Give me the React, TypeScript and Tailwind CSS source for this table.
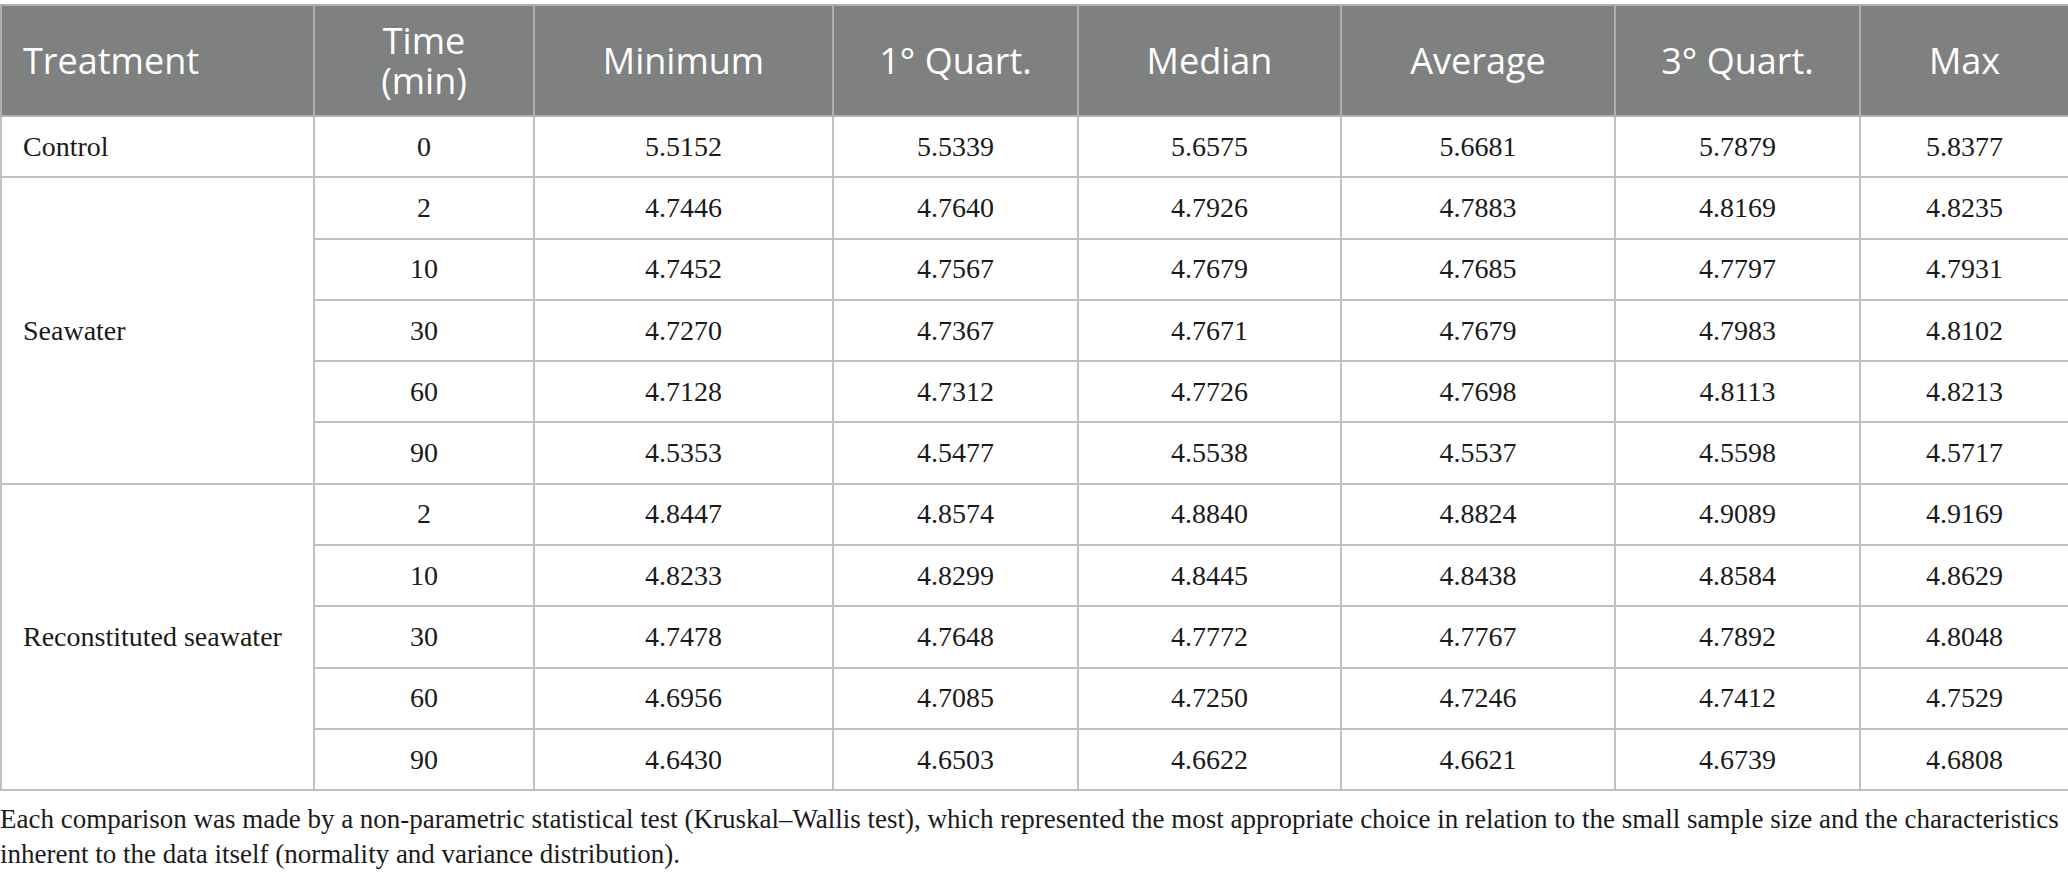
const headers = ["Treatment", "Time\n(min)", "Minimum", "1° Quart.", "Median", "Average", "3° Quart.", "Max"];

const colWidths = ["w-[313px]", "w-[220px]", "w-[299px]", "w-[245px]", "w-[263px]", "w-[274px]", "w-[245px]", "w-[209px]"];

type Group = { name: string; rows: string[][] };

const groups: Group[] = [
  { name: "Control", rows: [["0", "5.5152", "5.5339", "5.6575", "5.6681", "5.7879", "5.8377"]] },
  {
    name: "Seawater",
    rows: [
      ["2", "4.7446", "4.7640", "4.7926", "4.7883", "4.8169", "4.8235"],
      ["10", "4.7452", "4.7567", "4.7679", "4.7685", "4.7797", "4.7931"],
      ["30", "4.7270", "4.7367", "4.7671", "4.7679", "4.7983", "4.8102"],
      ["60", "4.7128", "4.7312", "4.7726", "4.7698", "4.8113", "4.8213"],
      ["90", "4.5353", "4.5477", "4.5538", "4.5537", "4.5598", "4.5717"],
    ],
  },
  {
    name: "Reconstituted seawater",
    rows: [
      ["2", "4.8447", "4.8574", "4.8840", "4.8824", "4.9089", "4.9169"],
      ["10", "4.8233", "4.8299", "4.8445", "4.8438", "4.8584", "4.8629"],
      ["30", "4.7478", "4.7648", "4.7772", "4.7767", "4.7892", "4.8048"],
      ["60", "4.6956", "4.7085", "4.7250", "4.7246", "4.7412", "4.7529"],
      ["90", "4.6430", "4.6503", "4.6622", "4.6621", "4.6739", "4.6808"],
    ],
  },
];

export default function App() {
  return (
    <div className="w-[2068px] bg-white pt-[4px]">
      <table className="w-full table-fixed border-collapse">
        <colgroup>
          {colWidths.map((w, i) => (
            <col key={i} className={w} />
          ))}
        </colgroup>
        <thead>
          <tr className="h-[111px] bg-[#7f8080]">
            {headers.map((h, i) => (
              <th
                key={i}
                className={
                  "border-2 border-[#b0b0b0] font-['Open_Sans',sans-serif] text-[36px] font-normal leading-[40px] text-white whitespace-pre-line " +
                  (i === 0 ? "pl-[21px] text-left" : "text-center")
                }
              >
                {h}
              </th>
            ))}
          </tr>
        </thead>
        <tbody className="font-['Liberation_Serif',serif] text-[28px] text-[#1a1a1a]">
          {groups.map((g) =>
            g.rows.map((r, ri) => (
              <tr key={g.name + ri} className="h-[61.3px]">
                {ri === 0 && (
                  <td rowSpan={g.rows.length} className="border-2 border-[#c0c0c0] pl-[21px] text-left">
                    {g.name}
                  </td>
                )}
                {r.map((v, ci) => (
                  <td key={ci} className="border-2 border-[#c0c0c0] text-center">
                    {v}
                  </td>
                ))}
              </tr>
            ))
          )}
        </tbody>
      </table>
      <p className="mt-[11px] font-['Liberation_Serif',serif] text-[27px] leading-[35px] text-[#1a1a1a]">
        Each comparison was made by a non-parametric statistical test (Kruskal–Wallis test), which represented the most
        appropriate choice in relation to the small sample size and the characteristics inherent to the data itself
        (normality and variance distribution).
      </p>
    </div>
  );
}
